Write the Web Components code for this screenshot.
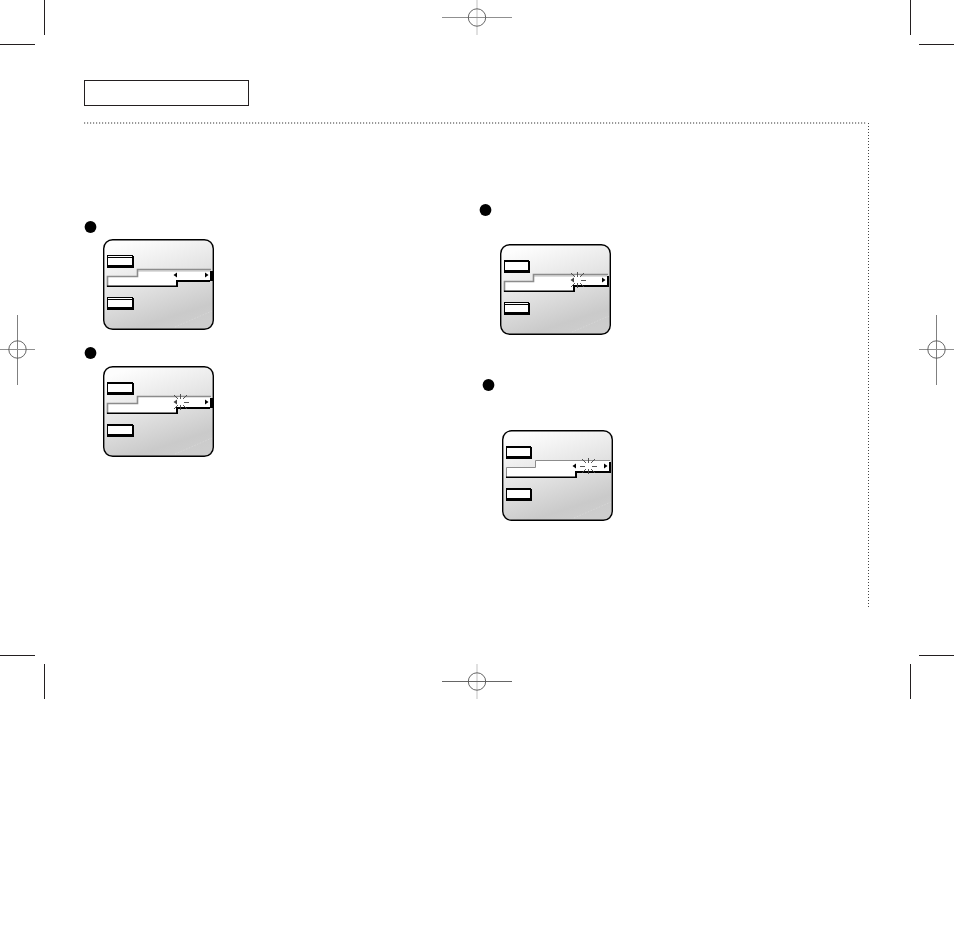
<!DOCTYPE html>
<html lang="en">
<head>
<meta charset="utf-8">
<meta name="viewport" content="width=device-width, initial-scale=1">
<title>Menu setup</title>
<style>
  body {
    margin: 0;
    background: #fff;
    font-family: "Liberation Sans", Arial, sans-serif;
  }
</style>
</head>
<body>
<print-sheet>
  <title-box></title-box>
  <dotted-frame>
    <step-column>
      <menu-step lead="6"><menu-screen buttons="double double" strip edge="wide"></menu-screen></menu-step>
      <menu-step lead="7"><menu-screen buttons="single single" edge="wide" blink="77"></menu-screen></menu-step>
    </step-column>
    <step-column second>
      <menu-step lead="28" inset="21"><menu-screen buttons="single double" strip blink="77"></menu-screen></menu-step>
      <menu-step lead="39" inset="20" indent><menu-screen buttons="single single" blink="86"></menu-screen></menu-step>
    </step-column>
  </dotted-frame>
</print-sheet>

<script>
class CropMark extends HTMLElement {

    constructor() {
        super();
        this.attachShadow({mode: 'open'});
    }

    connectedCallback() {
        const corner = this.getAttribute('corner');
        // width, height, x of the upright, y of the level, and where each starts
        const marks = {
          tl: [45, 45, 44, 44, 0, 0],
          tr: [44, 45, 0, 44, 9, 0],
          bl: [45, 44, 44, 0, 0, 9],
          br: [44, 44, 0, 0, 9, 9]
        };
        const [w, h, x, y, left, top] = marks[corner];
        this.shadowRoot.innerHTML = `
        <style>
          :host { display: block; }
          svg { display: block; }
        </style>
        <svg width="${w}" height="${h}" fill="#231f20" aria-hidden="true">
          <rect x="${x}" y="${top}" width="1" height="35"/>
          <rect x="${left}" y="${y}" width="35" height="1"/>
        </svg>
        `;
    }

}

class RegistrationMark extends HTMLElement {

    constructor() {
        super();
        this.attachShadow({mode: 'open'});
    }

    connectedCallback() {
        const tall = this.hasAttribute('tall');
        const w = tall ? 35 : 71;
        const h = tall ? 70 : 35;
        const cx = tall ? 17 : 35;
        const cy = tall ? 34 : 17;
        const upright = tall
          ? `<rect x="${cx}" y="0" width="1" height="${h}" fill="#808080"/>`
          : `<rect x="${cx - 1}" y="0" width="2" height="${h}" fill="#e0e0e0"/>`;
        this.shadowRoot.innerHTML = `
        <style>
          :host { display: block; }
          svg { display: block; }
        </style>
        <svg width="${w}" height="${h}" aria-hidden="true">
          ${upright}
          <rect x="0" y="${cy}" width="${tall ? 35 : 70}" height="1" fill="var(--level, #909090)"/>
          <circle cx="${tall ? cx + 0.5 : cx}" cy="${cy + 0.5}" r="8.7" fill="none" stroke="#555" stroke-width="0.9"/>
        </svg>
        `;
    }

}

class PrintSheet extends HTMLElement {

    constructor() {
        super();
        this.attachShadow({mode: 'open'});
        this.shadowRoot.innerHTML = `
        <style>
          :host {
            display: grid;
            grid-template-columns: 45px 1fr 44px;
            grid-template-rows: auto auto auto;
          }

          main {
            padding: 35px 41px 47px 39px;
          }

          .middle {
            justify-self: center;
          }

          .side {
            align-self: center;
          }

          .end {
            justify-self: end;
          }

          .bottom {
            align-self: end;
            --level: #666;
          }
        </style>
        <crop-mark corner="tl"></crop-mark>
        <registration-mark class="middle"></registration-mark>
        <crop-mark corner="tr"></crop-mark>
        <registration-mark tall class="side"></registration-mark>
        <main><slot></slot></main>
        <registration-mark tall class="side end"></registration-mark>
        <crop-mark corner="bl"></crop-mark>
        <registration-mark class="middle bottom"></registration-mark>
        <crop-mark corner="br"></crop-mark>
        `;
    }

}

class TitleBox extends HTMLElement {

    constructor() {
        super();
        this.attachShadow({mode: 'open'});
        this.shadowRoot.innerHTML = `
        <style>
          :host {
            display: block;
            box-sizing: border-box;
            width: 165px;
            min-height: 26px;
            margin-bottom: 16px;
            border: 1px solid #231f20;
          }
        </style>
        <slot></slot>
        `;
    }

}

class DottedFrame extends HTMLElement {

    constructor() {
        super();
        this.attachShadow({mode: 'open'});
        this.shadowRoot.innerHTML = `
        <style>
          :host {
            display: grid;
            grid-template-columns: 1fr 1fr;
            column-gap: 1px;
            align-items: start;
            padding: 82px 0 87px;
            background:
              repeating-linear-gradient(to right, #999 0 1px, #eee 1px 2px, #fff 2px 3px) top left / calc(100% - 2px) 2px no-repeat,
              repeating-linear-gradient(to bottom, #fff 0 1px, #444 1px 2px, #fff 2px 3px) top right / 1px 100% no-repeat;
          }
        </style>
        <slot></slot>
        `;
    }

}

class StepColumn extends HTMLElement {

    constructor() {
        super();
        this.attachShadow({mode: 'open'});
        this.shadowRoot.innerHTML = `
        <style>
          :host {
            display: flex;
            flex-direction: column;
            gap: 17px;
            padding-top: 17px;
          }

          :host([second]) {
            gap: 44px;
            padding-top: 0;
            padding-left: 2px;
          }
        </style>
        <slot></slot>
        `;
    }

}

class MenuStep extends HTMLElement {

    constructor() {
        super();
        this.attachShadow({mode: 'open'});
        this.shadowRoot.innerHTML = `
        <style>
          :host {
            display: flex;
            flex-direction: column;
          }

          :host([indent]) {
            padding-left: 3px;
          }

          svg {
            display: block;
          }

          #screen {
            padding-left: 19px;
          }
        </style>
        <svg width="13" height="12" aria-hidden="true"><circle cx="6.5" cy="6" r="5.9"/></svg>
        <div id="screen"><slot></slot></div>
        `;
    }

    connectedCallback() {
        const screen = this.shadowRoot.getElementById('screen');
        screen.style.marginTop = this.getAttribute('lead') + 'px';
        if (this.hasAttribute('inset')) {
          screen.style.paddingLeft = this.getAttribute('inset') + 'px';
        }
    }

}

class MenuScreen extends HTMLElement {

    constructor() {
        super();
        this.attachShadow({mode: 'open'});
    }

    connectedCallback() {
        const [upper, lower] = this.getAttribute('buttons').split(' ');
        const wide = this.getAttribute('edge') === 'wide';
        const strip = this.hasAttribute('strip');
        const blink = Number(this.getAttribute('blink'));
        const step = wide ? 34 : 33;
        const thick = wide || strip;
        const leftArrow = blink === 77 ? '#444' : '#000';

        this.shadowRoot.innerHTML = `
        <style>
          :host { display: block; }
          svg { display: block; }
        </style>
        <svg width="111" height="91" viewBox="0 0 111 91" aria-hidden="true">
          <defs>
            <linearGradient id="shade" x1="0.3" y1="0" x2="0.7" y2="1">
              <stop offset="0" stop-color="#fdfdfd"/>
              <stop offset="0.45" stop-color="#e4e4e4"/>
              <stop offset="0.85" stop-color="#cacaca"/>
              <stop offset="1" stop-color="#cdcdcd"/>
            </linearGradient>
          </defs>
          <rect x="0.7" y="0.7" width="109.6" height="89.6" rx="9" fill="url(#shade)" stroke="#000" stroke-width="1.4"/>
          <path d="M72 88L109 72" stroke="#dcdcdc" stroke-width="0.6" stroke-dasharray="1.5 1.5"/>
          ${this._button(16, upper, wide)}
          ${this._button(58, lower, wide)}
          <path d="M4 38H${step}V31H108V42H74V48H4Z" fill="#fff"/>
          ${strip ? `<rect x="${step + 1}" y="31" width="73" height="2" fill="#ddd"/>` : ''}
          <path d="M4.5 48V37.5H${step + 0.5}V30.5H108" fill="none" stroke="#8c8c8c" stroke-width="${thick ? 1.6 : 1}"/>
          <path d="M4 46.6H73V41H107V43H75V48H4Z"/>
          ${wide ? '<rect x="107" y="32" width="3" height="10"/>' : '<rect x="107" y="32" width="2" height="11"/>'}
          ${blink ? this._burst(blink) : ''}
          <path d="M70.5 36L74 33.5V38.5Z" fill="${leftArrow}"/>
          <path d="M105.5 36L102 33.5V38.5Z"/>
        </svg>
        `;
    }

    _button(y, kind, wide) {
        const w = wide ? 27 : 26;
        const face = kind === 'double' ? 9 : 8;
        return `
          <rect x="4" y="${y}" width="${w - 1}" height="13"/>
          <rect x="6" y="${y + 1}" width="${w - 2}" height="12"/>
          <rect x="5" y="${y + 10 - face}" width="${w - 3}" height="${face}" fill="#fff"/>
          ${kind === 'double' ? `<rect x="5" y="${y + 2}" width="${w - 3}" height="1"/>` : ''}
        `;
    }

    // rays round a white centre; the far left one shows only clear of the arrow
    _burst(x) {
        const left = x > 80 ? `M${x - 3} 36.5H${x - 8}` : '';
        return `
          <circle cx="${x}.5" cy="36" r="5" fill="#fff"/>
          <path d="M${x}.5 33V28M${x}.5 39V44M${x + 4} 36.5H${x + 9}M${x + 3} 33L${x + 7} 29M${x + 3} 39L${x + 7} 43M${x - 2} 33L${x - 6} 29M${x - 2} 39L${x - 6} 43${left}"
            fill="none" stroke="#444" stroke-width="0.9"/>
        `;
    }

}

customElements.define('crop-mark', CropMark);
customElements.define('registration-mark', RegistrationMark);
customElements.define('print-sheet', PrintSheet);
customElements.define('title-box', TitleBox);
customElements.define('dotted-frame', DottedFrame);
customElements.define('step-column', StepColumn);
customElements.define('menu-step', MenuStep);
customElements.define('menu-screen', MenuScreen);
</script>
</body>
</html>
